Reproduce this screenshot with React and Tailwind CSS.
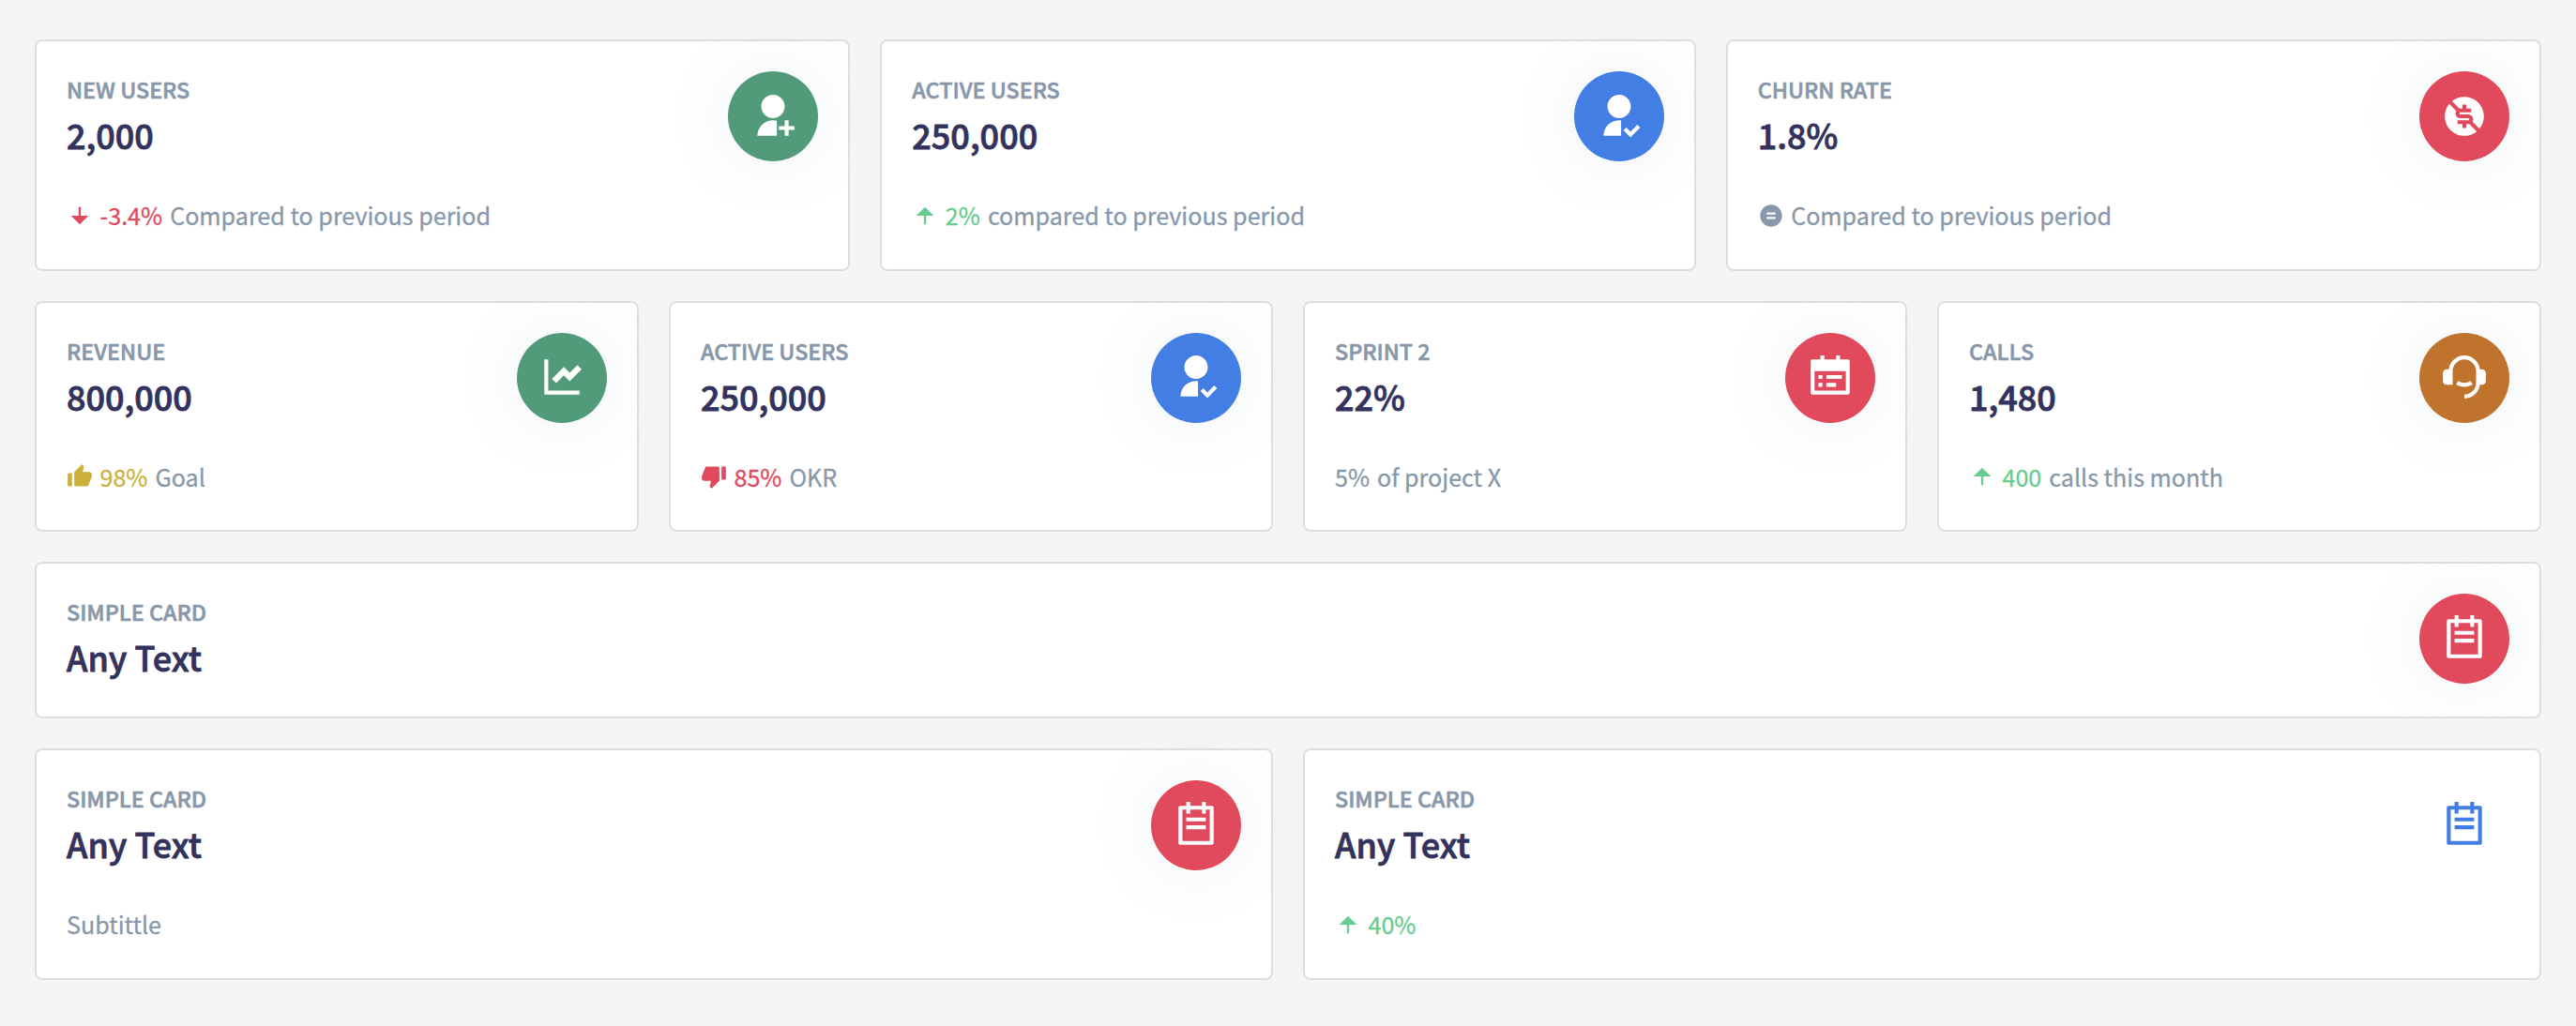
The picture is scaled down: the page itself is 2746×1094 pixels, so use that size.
import {
  RiCreativeCommonsNcFill,
  RiCreativeCommonsNdFill,
  RiCustomerService2Fill,
  RiLineChartFill,
  RiThumbDownFill,
  RiThumbUpFill,
  RiTodoLine,
} from "react-icons/ri";

function Glyph({ d, className }) {
  return (
    <svg viewBox="0 0 24 24" fill="currentColor" className={className}>
      <path d={d} />
    </svg>
  );
}

const UserAdd = ({ className }) => (
  <Glyph
    className={className}
    d="M14 14.252V22H4a8 8 0 0 1 10-7.748zM12 13c-3.315 0-6-2.685-6-6s2.685-6 6-6 6 2.685 6 6-2.685 6-6 6zm6 4v-3h2v3h3v2h-3v3h-2v-3h-3v-2h3z"
  />
);
const UserFollow = ({ className }) => (
  <Glyph
    className={className}
    d="M13 14.062V22H4a8 8 0 0 1 9-7.938zM12 13c-3.315 0-6-2.685-6-6s2.685-6 6-6 6 2.685 6 6-2.685 6-6 6zm5.793 6.914l3.535-3.535 1.415 1.414-4.95 4.95-3.536-3.536 1.415-1.414 2.12 2.121z"
  />
);
const CalendarTodo = ({ className }) => (
  <Glyph
    className={className}
    d="M17 3h4a1 1 0 0 1 1 1v16a1 1 0 0 1-1 1H3a1 1 0 0 1-1-1V4a1 1 0 0 1 1-1h4V1h2v2h6V1h2v2zM4 9v10h16V9H4zm2 2h2v2H6v-2zm0 4h2v2H6v-2zm4-4h8v2h-8v-2zm0 4h5v2h-5v-2z"
  />
);
const ArrowUp = ({ className }) => <Glyph className={className} d="M13 12v8h-2v-8H4l8-8 8 8z" />;
const ArrowDown = ({ className }) => <Glyph className={className} d="M13 12h7l-8 8-8-8h7V4h2v8z" />;

const SHADOW = "shadow-[0_0_64px_0_rgba(136,152,170,0.15)]";
const GREEN = `bg-[#529b7a] text-white ${SHADOW}`;
const BLUE = `bg-[#437ee4] text-white ${SHADOW}`;
const RED = `bg-[#e1495d] text-white ${SHADOW}`;
const ORANGE = `bg-[#bf732c] text-white ${SHADOW}`;
const PLAIN = "bg-white text-[#437ee4]";

function Card({ label, value, Icon, badge, iconShift = "", height, children }) {
  return (
    <section
      className={`relative flex min-w-0 flex-1 items-start justify-between rounded-[8px] border-2 border-[#dedede] bg-white p-8 ${height}`}
    >
      <div className="whitespace-nowrap">
        <h2 className="text-[23.3px] leading-[38px] font-medium uppercase text-[#8898aa] [-webkit-text-stroke:0.6px_currentColor]">
          {label}
        </h2>
        <p className="text-[36px] leading-[58px] font-medium text-[#32325d] [-webkit-text-stroke:0.8px_currentColor]">
          {value}
        </p>
        {children && (
          <div className="mt-[37px] flex items-center text-[25.1px] leading-[40px] text-[#8898aa] [-webkit-text-stroke:0.3px_currentColor]">
            {children}
          </div>
        )}
      </div>
      <div className={`flex size-24 shrink-0 items-center justify-center rounded-full ${badge}`}>
        <Icon className={`size-[50px] ${iconShift}`} />
      </div>
    </section>
  );
}

function Trend({ Icon, amount, color, text, iconShift = "mt-0.5" }) {
  return (
    <>
      {Icon && <Icon className={`mr-[7.5px] size-7 shrink-0 ${iconShift} ${color}`} />}
      {amount && <span className={`mr-2 ${color}`}>{amount}</span>}
      {text && <span>{text}</span>}
    </>
  );
}

const RED_TEXT = "text-[#e1495d]";
const GREEN_TEXT = "text-[#66cc91]";
const YELLOW_TEXT = "text-[#cbb03b]";
const UP = "-mt-0.5";

export default function App() {
  return (
    <main className="flex h-[1094px] flex-col gap-8 overflow-hidden bg-[#f5f5f5] pt-[42px] pr-[37px] pl-[37px] font-['Noto_Sans_CJK_SC','Open_Sans',sans-serif]">
      <div className="flex gap-8">
        <Card label="New users" value="2,000" Icon={UserAdd} badge={GREEN} height="h-[247px]">
          <Trend Icon={ArrowDown} amount="-3.4%" color={RED_TEXT} text="Compared to previous period" />
        </Card>
        <Card label="Active users" value="250,000" Icon={UserFollow} badge={BLUE} height="h-[247px]">
          <Trend Icon={ArrowUp} amount="2%" color={GREEN_TEXT} text="compared to previous period" />
        </Card>
        <Card label="Churn rate" value="1.8%" Icon={RiCreativeCommonsNcFill} badge={RED} height="h-[247px]">
          <Trend Icon={RiCreativeCommonsNdFill} color="text-[#8898aa]" text="Compared to previous period" />
        </Card>
      </div>

      <div className="flex gap-8">
        <Card label="Revenue" value="800,000" Icon={RiLineChartFill} badge={GREEN} iconShift={UP} height="h-[246px]">
          <Trend Icon={RiThumbUpFill} amount="98%" color={YELLOW_TEXT} text="Goal" iconShift="" />
        </Card>
        <Card label="Active users" value="250,000" Icon={UserFollow} badge={BLUE} iconShift={UP} height="h-[246px]">
          <Trend Icon={RiThumbDownFill} amount="85%" color={RED_TEXT} text="OKR" iconShift="" />
        </Card>
        <Card label="Sprint 2" value="22%" Icon={CalendarTodo} badge={RED} iconShift={UP} height="h-[246px]">
          <Trend amount="5%" color="text-[#8898aa]" text="of project X" />
        </Card>
        <Card label="Calls" value="1,480" Icon={RiCustomerService2Fill} badge={ORANGE} iconShift={UP} height="h-[246px]">
          <Trend Icon={ArrowUp} amount="400" color={GREEN_TEXT} text="calls this month" iconShift="" />
        </Card>
      </div>

      <div className="flex gap-8">
        <Card label="Simple card" value="Any Text" Icon={RiTodoLine} badge={RED} height="h-[167px]" />
      </div>

      <div className="flex gap-8">
        <Card label="Simple card" value="Any Text" Icon={RiTodoLine} badge={RED} height="h-[247px]">
          <Trend text="Subtittle" />
        </Card>
        <Card label="Simple card" value="Any Text" Icon={RiTodoLine} badge={PLAIN} height="h-[247px]">
          <Trend Icon={ArrowUp} amount="40%" color={GREEN_TEXT} />
        </Card>
      </div>
    </main>
  );
}
